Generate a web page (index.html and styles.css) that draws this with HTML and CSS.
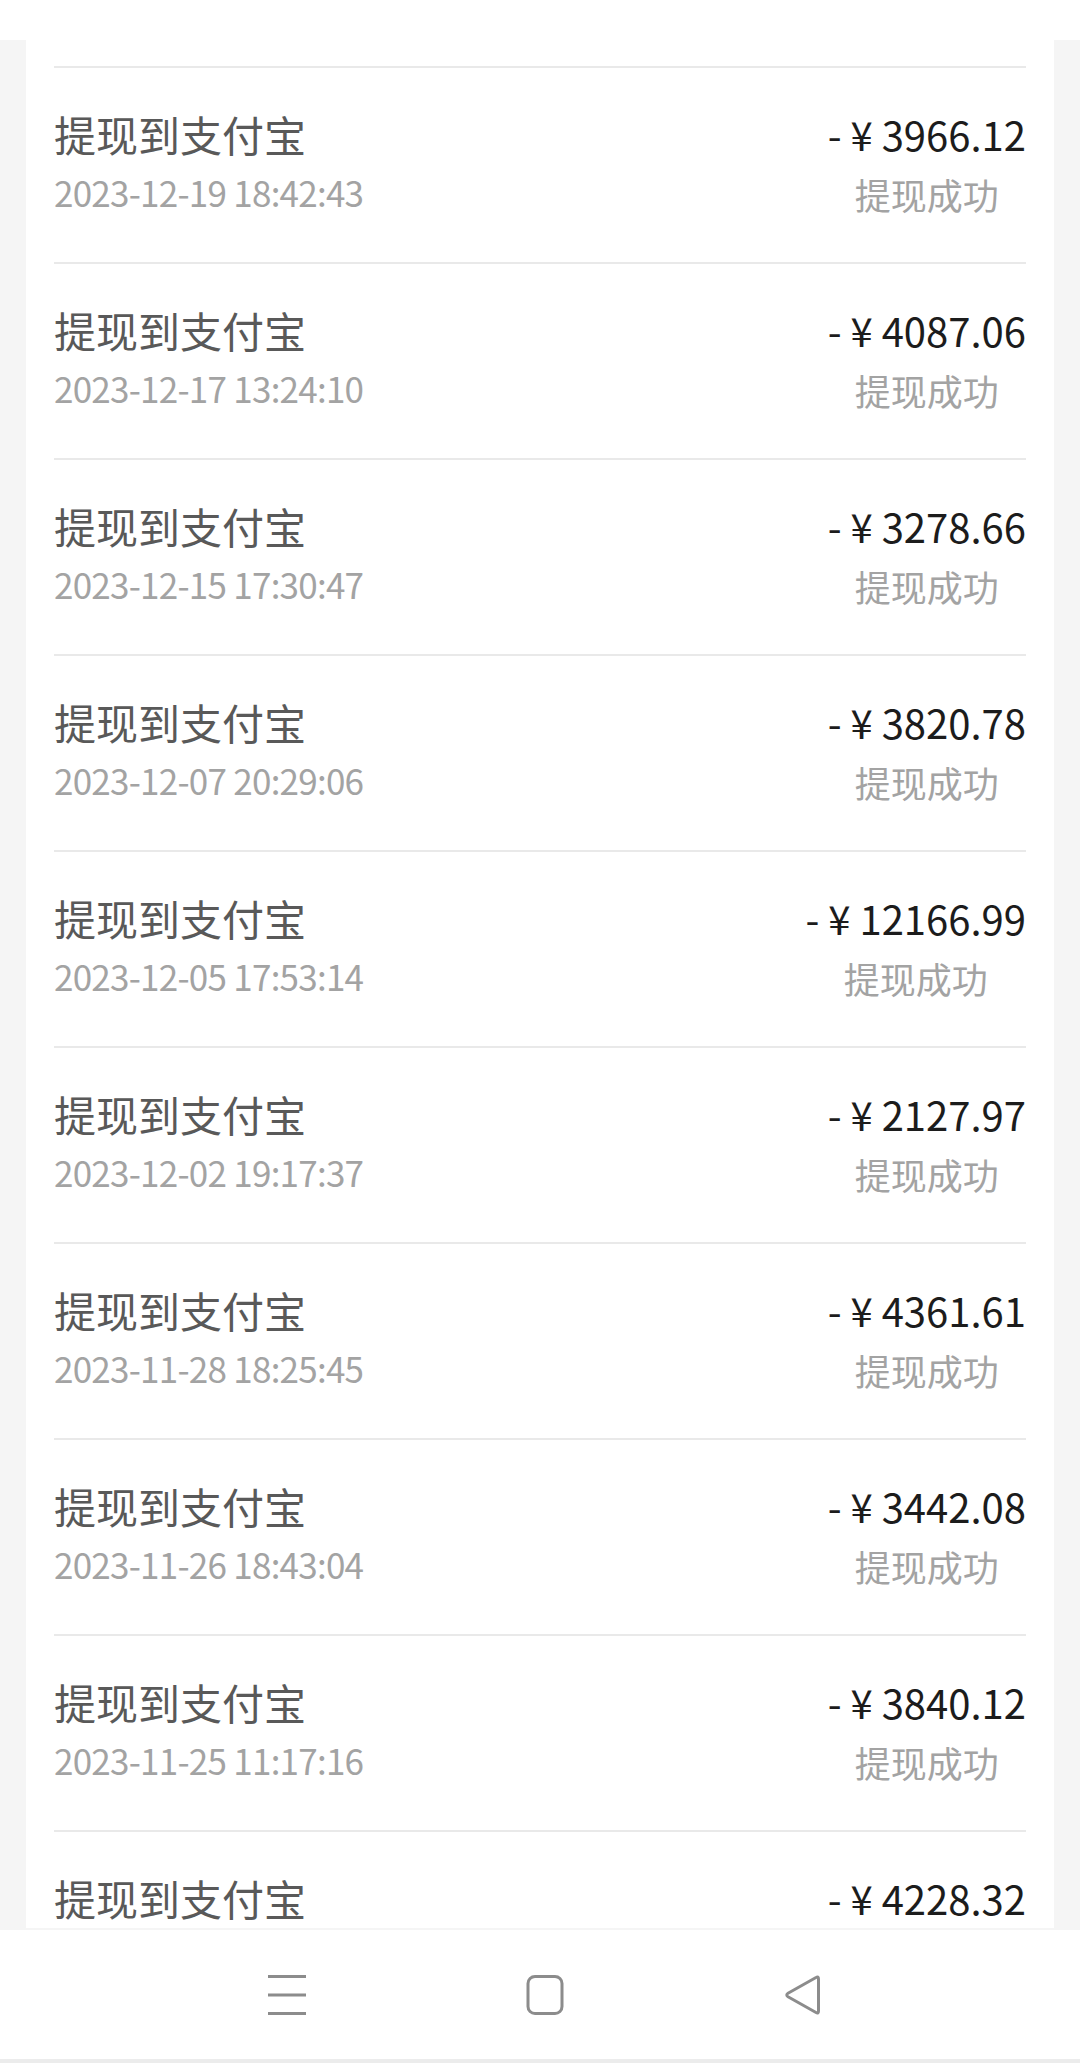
FILE: index.html
```html
<!DOCTYPE html>
<html lang="zh-CN">
<head>
    <meta charset="UTF-8">
    <meta name="viewport" content="width=device-width, initial-scale=1.0">
    <link rel="stylesheet" href="styles.css">
</head>
<body>

<div class="screen">
    <div class="top-bar"></div>

    <div class="content">
        <div class="record-list">
            <div class="list-head"></div>

            <div class="record">
                <div class="record-left">
                    <div class="record-title">提现到支付宝</div>
                    <div class="record-time">2023-12-19 18:42:43</div>
                </div>
                <div class="record-right">
                    <div class="record-amount">- ¥ 3966.12</div>
                    <div class="record-status">提现成功</div>
                </div>
            </div>

            <div class="record">
                <div class="record-left">
                    <div class="record-title">提现到支付宝</div>
                    <div class="record-time">2023-12-17 13:24:10</div>
                </div>
                <div class="record-right">
                    <div class="record-amount">- ¥ 4087.06</div>
                    <div class="record-status">提现成功</div>
                </div>
            </div>

            <div class="record">
                <div class="record-left">
                    <div class="record-title">提现到支付宝</div>
                    <div class="record-time">2023-12-15 17:30:47</div>
                </div>
                <div class="record-right">
                    <div class="record-amount">- ¥ 3278.66</div>
                    <div class="record-status">提现成功</div>
                </div>
            </div>

            <div class="record">
                <div class="record-left">
                    <div class="record-title">提现到支付宝</div>
                    <div class="record-time">2023-12-07 20:29:06</div>
                </div>
                <div class="record-right">
                    <div class="record-amount">- ¥ 3820.78</div>
                    <div class="record-status">提现成功</div>
                </div>
            </div>

            <div class="record">
                <div class="record-left">
                    <div class="record-title">提现到支付宝</div>
                    <div class="record-time">2023-12-05 17:53:14</div>
                </div>
                <div class="record-right">
                    <div class="record-amount">- ¥ 12166.99</div>
                    <div class="record-status">提现成功</div>
                </div>
            </div>

            <div class="record">
                <div class="record-left">
                    <div class="record-title">提现到支付宝</div>
                    <div class="record-time">2023-12-02 19:17:37</div>
                </div>
                <div class="record-right">
                    <div class="record-amount">- ¥ 2127.97</div>
                    <div class="record-status">提现成功</div>
                </div>
            </div>

            <div class="record">
                <div class="record-left">
                    <div class="record-title">提现到支付宝</div>
                    <div class="record-time">2023-11-28 18:25:45</div>
                </div>
                <div class="record-right">
                    <div class="record-amount">- ¥ 4361.61</div>
                    <div class="record-status">提现成功</div>
                </div>
            </div>

            <div class="record">
                <div class="record-left">
                    <div class="record-title">提现到支付宝</div>
                    <div class="record-time">2023-11-26 18:43:04</div>
                </div>
                <div class="record-right">
                    <div class="record-amount">- ¥ 3442.08</div>
                    <div class="record-status">提现成功</div>
                </div>
            </div>

            <div class="record">
                <div class="record-left">
                    <div class="record-title">提现到支付宝</div>
                    <div class="record-time">2023-11-25 11:17:16</div>
                </div>
                <div class="record-right">
                    <div class="record-amount">- ¥ 3840.12</div>
                    <div class="record-status">提现成功</div>
                </div>
            </div>

            <!-- 被底部导航挡住的一条 -->
            <div class="record record-last">
                <div class="record-left">
                    <div class="record-title">提现到支付宝</div>
                </div>
                <div class="record-right">
                    <div class="record-amount">- ¥ 4228.32</div>
                </div>
            </div>
        </div>
    </div>

    <!-- 底部导航 -->
    <div class="nav-bar">
        <svg class="nav-icon" width="40" height="40" viewBox="0 0 40 40">
            <line x1="1" y1="1.5" x2="39" y2="1.5"/>
            <line x1="1" y1="20" x2="39" y2="20"/>
            <line x1="1" y1="38.5" x2="39" y2="38.5"/>
        </svg>
        <svg class="nav-icon" width="40" height="40" viewBox="0 0 40 40">
            <rect x="3" y="1.5" width="34" height="37" rx="7" ry="7"/>
        </svg>
        <svg class="nav-icon" width="40" height="40" viewBox="0 0 40 40">
            <path d="M35.5 4 Q35.5 1 33 2.5 L5 18.3 Q2.5 20 5 21.7 L33 37.5 Q35.5 39 35.5 36 Z"/>
        </svg>
    </div>
</div>

</body>
</html>
```

FILE: styles.css
```css
html, body {
    margin: 0;
    padding: 0;
}

body {
    font-family: "Noto Sans CJK SC", "Noto Sans", sans-serif;
    background-color: #f5f5f5;
}

.screen {
    height: 2063px;
    display: flex;
    flex-direction: column;
    overflow: hidden;
}

.top-bar {
    height: 40px;
    flex-shrink: 0;
    background-color: #fff;
}

.content {
    flex: 1;
    overflow: hidden;
    padding: 0 26px;
}

.record-list {
    background-color: #fff;
    padding: 0 28px;
}

.list-head {
    height: 26px;
}

.record {
    display: flex;
    justify-content: space-between;
    align-items: flex-start;
    height: 196px;
    box-sizing: border-box;
    border-top: 2px solid #e9e9e9;
    padding-top: 37px;
}

.record-last {
    height: 98px;
}

.record-title {
    font-size: 42px;
    line-height: 58px;
    color: #595959;
}

.record-time {
    font-size: 35px;
    line-height: 58px;
    letter-spacing: -0.75px;
    color: #a3a3a3;
}

.record-right {
    text-align: center;
}

.record-amount {
    font-size: 40px;
    line-height: 58px;
    color: #1c1c1c;
}

.record-status {
    font-size: 36px;
    line-height: 58px;
    margin-top: 2px;
    color: #a3a3a3;
}

/* 底部导航 */
.nav-bar {
    height: 129px;
    flex-shrink: 0;
    background-color: #fff;
    border-bottom: 4px solid #ececec;
    display: flex;
    justify-content: center;
    align-items: center;
    gap: 218px;
    padding-left: 10px;
}

.nav-icon {
    fill: none;
    stroke: #8c8c8c;
    stroke-width: 3;
    stroke-linejoin: round;
}
```
